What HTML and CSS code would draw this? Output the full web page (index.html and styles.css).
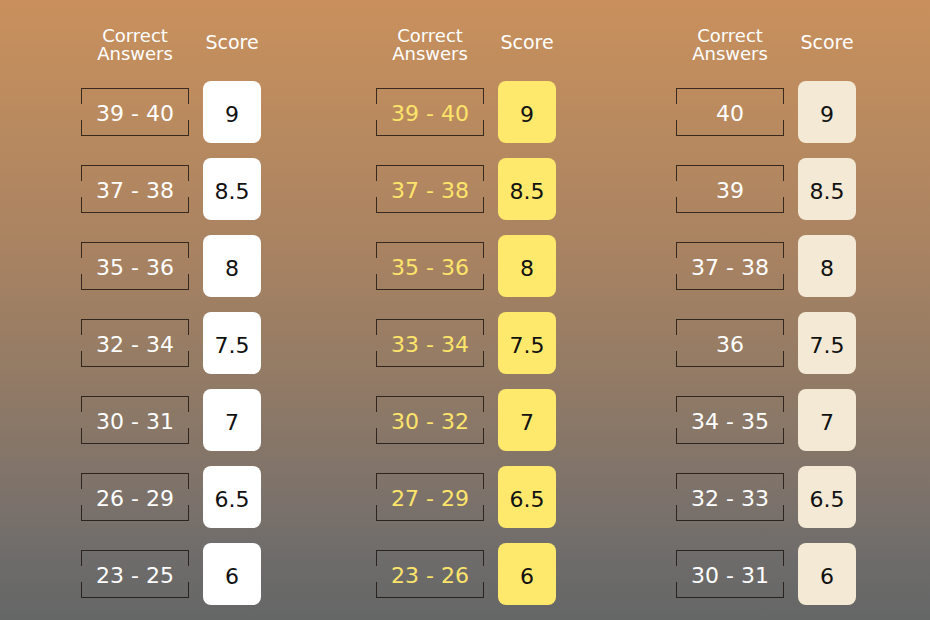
FILE: index.html
```html
<!DOCTYPE html>
<html lang="en">
<head>
  <meta charset="UTF-8">
  <meta name="viewport" content="width=device-width, initial-scale=1.0">
  <title>Band Score Table</title>
  <link rel="stylesheet" href="styles.css">
</head>
<body>

  <div class="tables">

    <div class="col col-white">
      <div class="head">
        <div class="head-range">Correct<br>Answers</div>
        <div class="head-score">Score</div>
      </div>
      <div class="row"><div class="range">39 - 40</div><div class="score">9</div></div>
      <div class="row"><div class="range">37 - 38</div><div class="score">8.5</div></div>
      <div class="row"><div class="range">35 - 36</div><div class="score">8</div></div>
      <div class="row"><div class="range">32 - 34</div><div class="score">7.5</div></div>
      <div class="row"><div class="range">30 - 31</div><div class="score">7</div></div>
      <div class="row"><div class="range">26 - 29</div><div class="score">6.5</div></div>
      <div class="row"><div class="range">23 - 25</div><div class="score">6</div></div>
    </div>

    <div class="col col-yellow">
      <div class="head">
        <div class="head-range">Correct<br>Answers</div>
        <div class="head-score">Score</div>
      </div>
      <div class="row"><div class="range">39 - 40</div><div class="score">9</div></div>
      <div class="row"><div class="range">37 - 38</div><div class="score">8.5</div></div>
      <div class="row"><div class="range">35 - 36</div><div class="score">8</div></div>
      <div class="row"><div class="range">33 - 34</div><div class="score">7.5</div></div>
      <div class="row"><div class="range">30 - 32</div><div class="score">7</div></div>
      <div class="row"><div class="range">27 - 29</div><div class="score">6.5</div></div>
      <div class="row"><div class="range">23 - 26</div><div class="score">6</div></div>
    </div>

    <div class="col col-beige">
      <div class="head">
        <div class="head-range">Correct<br>Answers</div>
        <div class="head-score">Score</div>
      </div>
      <div class="row"><div class="range">40</div><div class="score">9</div></div>
      <div class="row"><div class="range">39</div><div class="score">8.5</div></div>
      <div class="row"><div class="range">37 - 38</div><div class="score">8</div></div>
      <div class="row"><div class="range">36</div><div class="score">7.5</div></div>
      <div class="row"><div class="range">34 - 35</div><div class="score">7</div></div>
      <div class="row"><div class="range">32 - 33</div><div class="score">6.5</div></div>
      <div class="row"><div class="range">30 - 31</div><div class="score">6</div></div>
    </div>

  </div>

</body>
</html>
```

FILE: styles.css
```css
html, body {
  height: 100%;
}

body {
  margin: 0;
  overflow: hidden;
  font-family: 'DejaVu Sans', 'Open Sans', sans-serif;
  background: linear-gradient(to bottom,
    #c9905c 0%,
    #b98a5f 20%,
    #a78262 42%,
    #937b65 60%,
    #7f736a 78%,
    #6e6c6b 90%,
    #656666 100%);
}

.tables {
  display: flex;
  gap: 114px;
  padding: 26px 0 0 81px;
}

.col {
  display: flex;
  flex-direction: column;
  gap: 15px;
  width: 181px;
}

.col-beige {
  margin-left: 5px;
}

.head {
  display: flex;
  align-items: center;
  gap: 14px;
  height: 36px;
  margin-bottom: 4px;
  color: #fff;
  text-align: center;
}

.head-range {
  width: 108px;
  font-size: 18px;
  line-height: 18px;
  padding-top: 1px;
}

.head-score {
  width: 58px;
  font-size: 19px;
  padding-bottom: 4px;
}

.row {
  display: flex;
  align-items: center;
  gap: 14px;
  height: 62px;
}

.range {
  position: relative;
  width: 108px;
  height: 48px;
  box-sizing: border-box;
  padding-top: 3px;
  border-top: 1.5px solid rgba(25, 18, 12, 0.8);
  border-bottom: 1.5px solid rgba(25, 18, 12, 0.8);
  display: flex;
  align-items: center;
  justify-content: center;
  font-size: 22px;
  color: #fff;
}

.range::before,
.range::after {
  content: "";
  position: absolute;
  left: 0;
  right: 0;
  height: 15px;
  border-left: 1.5px solid rgba(25, 18, 12, 0.8);
  border-right: 1.5px solid rgba(25, 18, 12, 0.8);
}

.range::before {
  top: 0;
}

.range::after {
  bottom: 0;
}

.score {
  width: 58px;
  height: 62px;
  box-sizing: border-box;
  padding-top: 4px;
  border-radius: 8px;
  display: flex;
  align-items: center;
  justify-content: center;
  font-size: 22px;
  color: #111;
}

.col-white .score {
  background-color: #fff;
}

.col-yellow .score {
  background-color: #ffe96c;
}

.col-yellow .range {
  color: #fde46a;
}

.col-beige .score {
  background-color: #f3e9d5;
}
```
